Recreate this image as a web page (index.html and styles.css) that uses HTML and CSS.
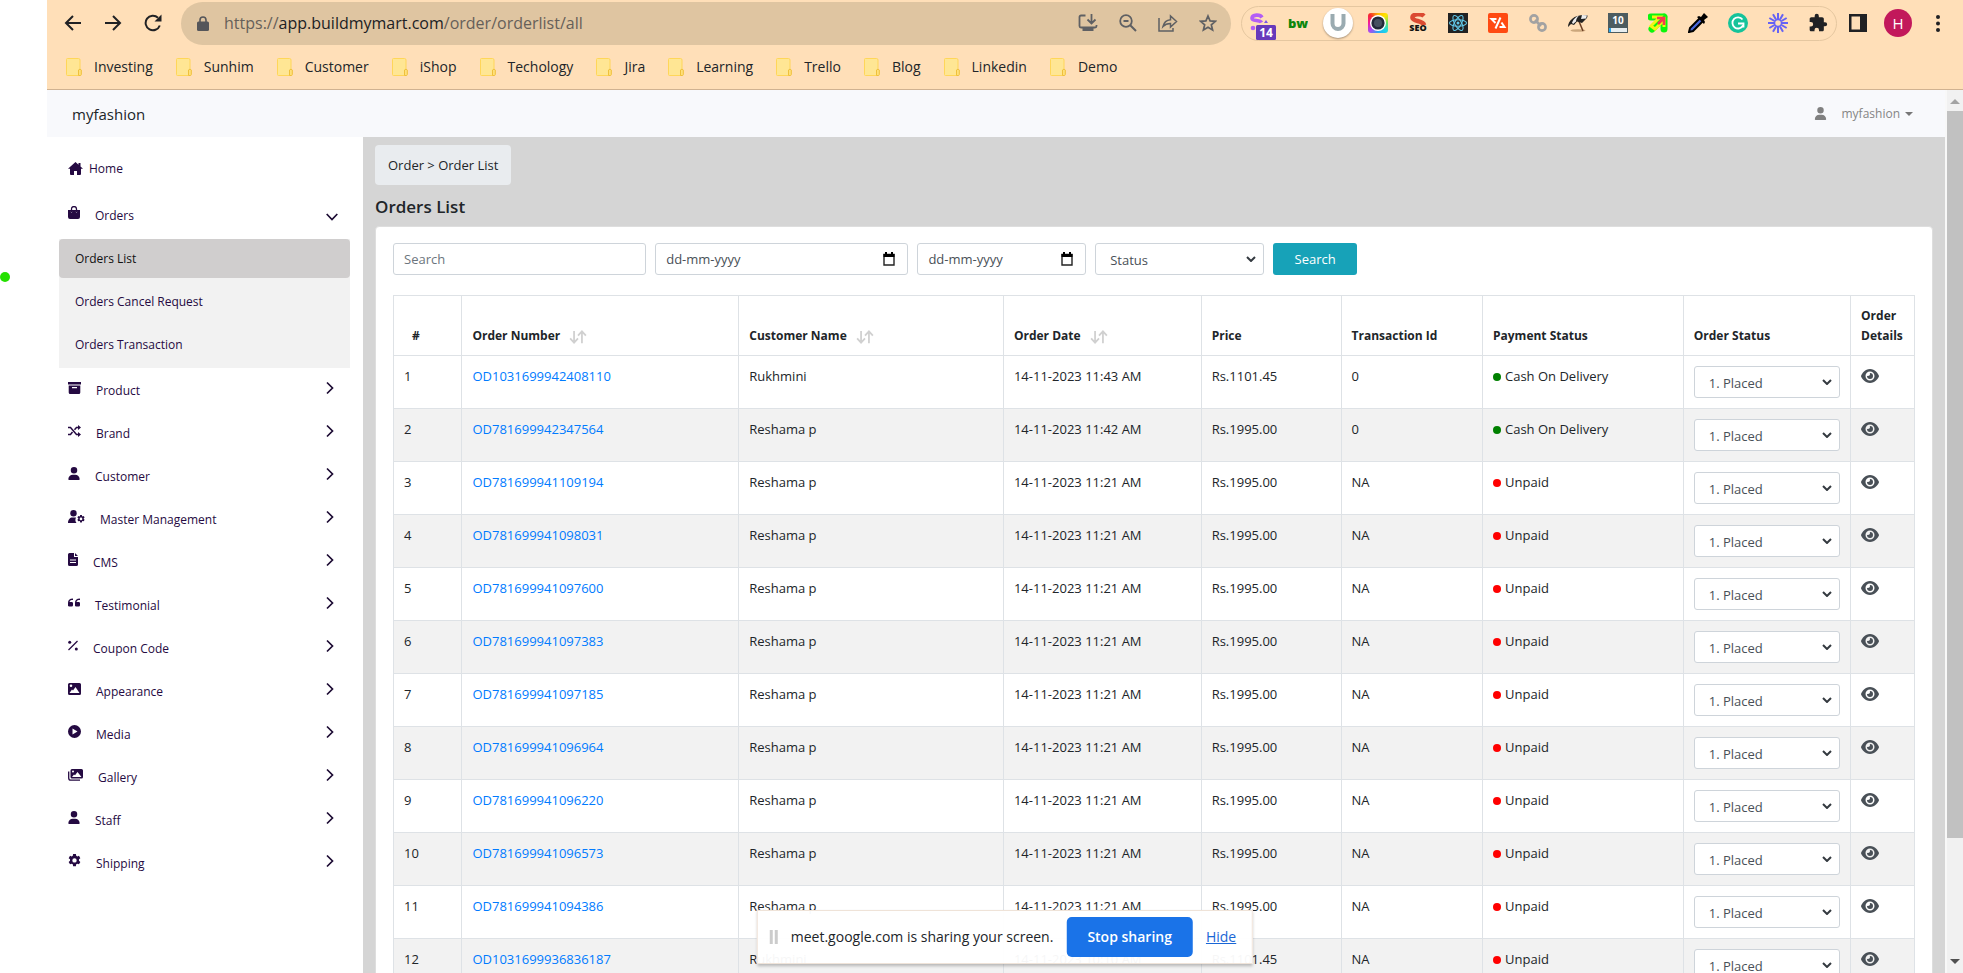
FILE: index.html
```
<!DOCTYPE html>
<html lang="en">
<head>
<meta charset="UTF-8">
<title>Orders List</title>
<link rel="stylesheet" href="styles.css">
<script>
window.onload = remplirTable;

// order, customer, date, price, transaction, payment
var orders = [
	["OD1031699942408110", "Rukhmini", "14-11-2023 11:43 AM", "Rs.1101.45", "0", "Cash On Delivery"],
	["OD781699942347564", "Reshama p", "14-11-2023 11:42 AM", "Rs.1995.00", "0", "Cash On Delivery"],
	["OD781699941109194", "Reshama p", "14-11-2023 11:21 AM", "Rs.1995.00", "NA", "Unpaid"],
	["OD781699941098031", "Reshama p", "14-11-2023 11:21 AM", "Rs.1995.00", "NA", "Unpaid"],
	["OD781699941097600", "Reshama p", "14-11-2023 11:21 AM", "Rs.1995.00", "NA", "Unpaid"],
	["OD781699941097383", "Reshama p", "14-11-2023 11:21 AM", "Rs.1995.00", "NA", "Unpaid"],
	["OD781699941097185", "Reshama p", "14-11-2023 11:21 AM", "Rs.1995.00", "NA", "Unpaid"],
	["OD781699941096964", "Reshama p", "14-11-2023 11:21 AM", "Rs.1995.00", "NA", "Unpaid"],
	["OD781699941096220", "Reshama p", "14-11-2023 11:21 AM", "Rs.1995.00", "NA", "Unpaid"],
	["OD781699941096573", "Reshama p", "14-11-2023 11:21 AM", "Rs.1995.00", "NA", "Unpaid"],
	["OD781699941094386", "Reshama p", "14-11-2023 11:21 AM", "Rs.1995.00", "NA", "Unpaid"],
	["OD1031699936836187", "Rukhmini", "14-11-2023 10:10 AM", "Rs.1101.45", "NA", "Unpaid"]
];

function remplirTable() {
	var html = "";
	for (var i = 0; i < orders.length; i++) {
		var o = orders[i];
		var dot = o[5] == "Unpaid" ? "dot unpaid" : "dot paid";
		html += '<tr><td>' + (i + 1) + '</td>'
			+ '<td><a href="#">' + o[0] + '</a></td>'
			+ '<td>' + o[1] + '</td><td>' + o[2] + '</td><td>' + o[3] + '</td><td>' + o[4] + '</td>'
			+ '<td><span class="' + dot + '"></span>' + o[5] + '</td>'
			+ '<td><select class="field" aria-label="Status of ' + o[0] + '"><option>1. Placed</option></select></td>'
			+ '<td><a href="#" class="eye" aria-label="Details of ' + o[0] + '"><svg width="18" height="14" viewBox="0 0 576 448"><use href="#i-eye"/></svg></a></td></tr>';
	}
	document.getElementById("orderRows").innerHTML = html;
}
</script>
</head>
<body>
<svg class="defs" aria-hidden="true">
	<symbol id="i-right" viewBox="0 0 8 14"><path d="M1 1.500 L6.500 7 L1 12.500" fill="none" stroke="#1c0b33" stroke-width="1.700"/></symbol>
	<symbol id="i-user" viewBox="0 0 448 512"><path d="M224 256A128 128 0 1 0 224 0a128 128 0 0 0 0 256zm-46 48C80 304 0 384 0 482c0 17 13 30 30 30h388c17 0 30-13 30-30 0-98-80-178-178-178z"/></symbol>
	<symbol id="i-folder" viewBox="0 0 16 18"><path d="M1.500.500h11a1.500 1.500 0 0 1 1.500 1.500v14a1.500 1.500 0 0 1-1.500 1.500h-11a1 1 0 0 1-1-1v-15a1 1 0 0 1 1-1z" fill="#ffe694" stroke="#ffd659"/><path d="M12.500 17.500v-5.500c0-.8 2.800-.8 2.800 0v4.500c0 .6-.4 1-1 1z" fill="#ffe07a" stroke="#efc03c"/></symbol>
	<symbol id="i-sort" viewBox="0 0 20 16"><path d="M5.500 1v13M1 9.500l4.500 5 4.500-5M14.500 15V2M10 6.500l4.500-5 4.500 5" fill="none" stroke="#d0d0d0" stroke-width="2"/></symbol>
	<symbol id="i-calendar" viewBox="0 0 12 14"><path d="M1 2.500h10v10.500h-10z" fill="none" stroke="#222" stroke-width="1.400"/><path d="M.500 2h11v3h-11zM2 0h2v2h-2zM8 0h2v2h-2z" fill="#000"/></symbol>
	<symbol id="i-gear" viewBox="0 0 16 16"><path fill-rule="evenodd" d="M6.300 0h3.400l.4 2.200 1.300.8 2.100-.8 1.700 3-1.700 1.400v1.600l1.700 1.500-1.700 3-2.100-.8-1.300.8-.4 2.300H6.300l-.4-2.300-1.300-.8-2.100.8-1.700-3 1.700-1.500V6.600L.8 5.200l1.700-3 2.100.8 1.300-.8zM8 5.200a2.700 2.700 0 1 0 0 5.400 2.700 2.700 0 0 0 0-5.400z"/></symbol>
	<symbol id="i-eye" viewBox="0 0 576 448"><path d="M288 0C207 0 143 37 96 80 49 124 18 175 3 212c-4 8-4 17 0 25 15 36 46 88 93 131 47 44 111 80 192 80s145-36 192-80c47-43 78-95 93-131 4-8 4-17 0-25-15-37-46-88-93-132C433 37 369 0 288 0zm0 80a144 144 0 1 1 0 288 144 144 0 0 1 0-288zm0 80c0 35-29 64-64 64-12 0-22-3-32-8-1 3 0 6 0 8a96 96 0 1 0 96-96h-8c5 10 8 20 8 32z" fill-rule="evenodd"/></symbol>
</svg>

<div class="gutter"><span class="green-dot"></span></div>

<div class="window">
	<header class="chrome">
		<div class="toolbar">
			<button class="nav" aria-label="Back"><svg width="18" height="18" viewBox="0 0 18 18"><path d="M17 9H2M9 2L2 9l7 7" fill="none" stroke="#202124" stroke-width="2"/></svg></button>
			<button class="nav" aria-label="Forward"><svg width="18" height="18" viewBox="0 0 18 18"><path d="M1 9h15M9 2l7 7-7 7" fill="none" stroke="#202124" stroke-width="2"/></svg></button>
			<button class="nav" aria-label="Reload"><svg width="18" height="18" viewBox="0 0 18 18"><path d="M15.800 11.500A7.300 7.300 0 1 1 14 3.700" fill="none" stroke="#202124" stroke-width="2"/><path d="M17.500.500v7h-7z" fill="#202124"/></svg></button>
			<div class="omnibox">
				<svg width="12" height="15" viewBox="0 0 12 15"><path d="M3 6V4a3 3 0 0 1 6 0v2" fill="none" stroke="#55565a" stroke-width="1.600"/><rect x="0" y="5.500" width="12" height="9.500" rx="1.500" fill="#55565a"/></svg>
				<div class="url">https://<span>app.buildmymart.com</span>/order/orderlist/all</div>
				<button aria-label="Install"><svg width="20" height="18" viewBox="0 0 20 18"><path d="M7.500 1.500H3A1.500 1.500 0 0 0 1.500 3v9A1.500 1.500 0 0 0 3 13.500h14a1.500 1.500 0 0 0 1.500-1.500v-1M13.500 0v9M9.500 5.500l4 4 4-4" fill="none" stroke="#5f6063" stroke-width="1.800"/><path d="M4.500 13h11v4h-11z" fill="#5f6063"/></svg></button>
				<button aria-label="Zoom"><svg width="18" height="18" viewBox="0 0 18 18"><circle cx="7" cy="7" r="5.800" fill="none" stroke="#5f6063" stroke-width="1.800"/><path d="M4.500 7h5M11 11l6 6" stroke="#5f6063" stroke-width="2"/></svg></button>
				<button aria-label="Share"><svg width="20" height="18" viewBox="0 0 20 18"><path d="M1 4v13h14v-3M5 12.500c1-4.500 3.500-6.500 7.500-6.800V2L18.500 7.500l-6 5.500V9.500C9.500 9.500 7 10.300 5 12.500z" fill="none" stroke="#5f6063" stroke-width="1.500"/></svg></button>
				<button aria-label="Bookmark"><svg width="18" height="18" viewBox="0 0 20 20"><path d="M10 2.200l2.300 5.400 5.900.5-4.500 3.900 1.400 5.700-5.100-3-5.100 3 1.400-5.700L1.800 8.100l5.900-.5z" fill="none" stroke="#5f6063" stroke-width="1.900"/></svg></button>
			</div>
			<div class="extensions">
				<svg class="ext-first" width="26" height="30" viewBox="0 0 26 30"><path d="M12 7.500C10 4 2.500 4.500 2 8c-.3 3.500 8 1.500 9.500 4.500" fill="none" stroke="#b35cf5" stroke-width="3.600"/><path d="M14 13l2-3 2 3z" fill="#7a55e8"/><circle cx="3" cy="18" r="2.300" fill="#b35cf5"/><rect x="6" y="15" width="20" height="15" rx="1.500" fill="#6739bb"/><text x="16" y="27" class="t-badge">14</text></svg>
				<svg width="20" height="20" viewBox="0 0 20 20"><text x="10" y="15" class="t-bw">bw</text></svg>
				<span class="u-round"><svg width="20" height="20" viewBox="0 0 20 20"><path d="M4.500 1v9.500a5.500 5.500 0 0 0 11 0V1" fill="none" stroke="#9aabb1" stroke-width="4"/></svg></span>
				<svg class="camera" width="20" height="20" viewBox="0 0 20 20"><circle cx="10" cy="10" r="8" fill="#fff"/><circle cx="10" cy="10" r="6.600" fill="#232a3a"/><circle cx="10" cy="10" r="4" fill="#465060"/></svg>
				<svg width="20" height="20" viewBox="0 0 20 20"><path d="M16 3C13 0 4 1 4.500 5c.4 3.500 11 2.500 11.500 7" fill="none" stroke="#db4a32" stroke-width="4.500"/><text x="10" y="18" class="t-seo">SEO</text></svg>
				<svg width="20" height="20" viewBox="0 0 20 20"><rect width="20" height="20" fill="#222"/><g fill="none" stroke="#61c8e8" stroke-width="1.100"><ellipse cx="10" cy="10" rx="8.500" ry="3.300"/><ellipse cx="10" cy="10" rx="8.500" ry="3.300" transform="rotate(60 10 10)"/><ellipse cx="10" cy="10" rx="8.500" ry="3.300" transform="rotate(120 10 10)"/></g><circle cx="10" cy="10" r="1.500" fill="#61c8e8"/></svg>
				<svg width="20" height="20" viewBox="0 0 20 20"><rect width="20" height="20" rx="2" fill="#ff4a12"/><path d="M8.500 6H3.500l4 4M12.500 4.500l-5 11M13.500 9.500l3 4.500h-5" fill="none" stroke="#fff" stroke-width="2"/></svg>
				<svg width="20" height="20" viewBox="0 0 20 20"><g fill="none" stroke="#a2a2a2" stroke-width="2.600"><circle cx="6" cy="6" r="3.600"/><circle cx="14" cy="14" r="3.600"/><path d="M7 7l6 6"/></g></svg>
				<svg width="20" height="20" viewBox="0 0 20 20"><ellipse cx="10" cy="17.500" rx="7.500" ry="1.300" fill="#cba77c"/><path d="M10 6l5 12" stroke="#6b3d22" stroke-width="1.500"/><path d="M0 14C0 7 7 1 19 2c1 .6.500 3-1 4l-4 4-5-1.500L6 12l-3-1z" fill="#222"/><path d="M4 9.500c2-4 4-6 7-7-2 2-3 4-3 6L5 11zM14 2l5 .2-1 3.300-5 .5z" fill="#eee"/></svg>
				<svg width="20" height="20" viewBox="0 0 20 20"><rect width="20" height="20" fill="#4d5c60"/><rect x="1" y="15" width="18" height="4" fill="#e8eef0"/><rect x="1" y="15" width="2" height="4" fill="#2aa6ea"/><text x="10" y="11" class="t-ten">10</text></svg>
				<svg width="20" height="20" viewBox="0 0 20 20"><path d="M3 4h13v12M16 4L4 16" fill="none" stroke="#0df50d" stroke-width="7" stroke-linejoin="round" stroke-linecap="round"/><path d="M4 4h8L3 13l4 3 9-9v7" fill="none" stroke="#f3f514" stroke-width="3"/><path d="M9 5h7v7M16 5l-6 6" fill="none" stroke="#fa3650" stroke-width="2.600"/></svg>
				<svg width="20" height="20" viewBox="0 0 20 20"><path d="M12 5L2 15l-1 4 4-1L15 8" fill="#4a68dc" stroke="#000" stroke-width="2"/><path d="M9 4l2-1 2 1 3-4 4 4-4 3 1 2-1 2z" fill="#000"/></svg>
				<svg width="20" height="20" viewBox="0 0 20 20"><circle cx="10" cy="10" r="10" fill="#15c39a"/><path d="M14.500 6.500A5.600 5.600 0 1 0 15 12.500M10 10.500h5.500v4" fill="none" stroke="#fff" stroke-width="1.800"/></svg>
				<svg width="20" height="20" viewBox="0 0 20 20"><g stroke="#6662f5" stroke-width="2"><path id="ray" d="M10 0v6M10 14v6"/><use href="#ray" transform="rotate(30 10 10)"/><use href="#ray" transform="rotate(60 10 10)"/><use href="#ray" transform="rotate(90 10 10)"/><use href="#ray" transform="rotate(120 10 10)"/><use href="#ray" transform="rotate(150 10 10)"/></g><circle cx="10" cy="10" r="3.500" fill="none" stroke="#6662f5" stroke-width="1.500"/></svg>
				<svg width="20" height="20" viewBox="0 0 24 24"><path fill="#202124" d="M20.500 11H19V7c0-1.100-.9-2-2-2h-4V3.500a2.500 2.500 0 0 0-5 0V5H4c-1.100 0-2 .9-2 2v3.800h1.500a2.700 2.700 0 0 1 0 5.400H2V20c0 1.100.9 2 2 2h3.800v-1.500a2.700 2.700 0 0 1 5.400 0V22H17c1.100 0 2-.9 2-2v-4h1.500a2.500 2.500 0 0 0 0-5z"/></svg>
			</div>
			<button class="side" aria-label="Side panel"><svg width="18" height="18" viewBox="0 0 18 18"><path fill="#202124" fill-rule="evenodd" d="M0 0h18v18H0zM2.500 2.500v13h8.500v-13z"/></svg></button>
			<button class="avatar">H</button>
			<button class="more" aria-label="Menu"><svg width="4" height="17" viewBox="0 0 4 17"><g fill="#202124"><circle cx="2" cy="2" r="2"/><circle cx="2" cy="8.500" r="2"/><circle cx="2" cy="15" r="2"/></g></svg></button>
		</div>
		<nav class="bookmarks">
			<a href="#"><svg width="16" height="18"><use href="#i-folder"/></svg>Investing</a>
			<a href="#"><svg width="16" height="18"><use href="#i-folder"/></svg>Sunhim</a>
			<a href="#"><svg width="16" height="18"><use href="#i-folder"/></svg>Customer</a>
			<a href="#"><svg width="16" height="18"><use href="#i-folder"/></svg>iShop</a>
			<a href="#"><svg width="16" height="18"><use href="#i-folder"/></svg>Techology</a>
			<a href="#"><svg width="16" height="18"><use href="#i-folder"/></svg>Jira</a>
			<a href="#"><svg width="16" height="18"><use href="#i-folder"/></svg>Learning</a>
			<a href="#"><svg width="16" height="18"><use href="#i-folder"/></svg>Trello</a>
			<a href="#"><svg width="16" height="18"><use href="#i-folder"/></svg>Blog</a>
			<a href="#"><svg width="16" height="18"><use href="#i-folder"/></svg>Linkedin</a>
			<a href="#"><svg width="16" height="18"><use href="#i-folder"/></svg>Demo</a>
		</nav>
	</header>

	<div class="viewport">
		<div class="app">
			<div class="topbar">
				<a href="#" class="brand">myfashion</a>
				<button class="account"><svg width="13" height="13" fill="#808080"><use href="#i-user"/></svg><span>myfashion</span><i class="caret"></i></button>
			</div>
			<div class="columns">
				<nav class="sidebar">
					<a href="#" class="home"><svg width="15" height="13" viewBox="0 0 15 13"><path d="M7.500 0L0 6.700h2V12a1 1 0 0 0 1 1h3V9h3v4h3a1 1 0 0 0 1-1V6.700h2L12.500 4.500V1h-2v1.700z"/></svg>Home</a>
					<button class="item open"><svg width="12" height="13" viewBox="0 0 12 13"><path d="M3.500 6V3a2.500 2.500 0 0 1 5 0v3" fill="none" stroke="#250a42" stroke-width="1.300"/><path fill-rule="evenodd" d="M0 4h12v7a2 2 0 0 1-2 2H2a2 2 0 0 1-2-2zM3.500 5a.7.7 0 1 0 0 1.400.7.700 0 0 0 0-1.400zM8.500 5a.7.7 0 1 0 0 1.400.7.700 0 0 0 0-1.400z"/></svg><span>Orders</span><svg class="arrow" width="12" height="8" viewBox="0 0 12 8"><path d="M.700 1L6 6.500 11.300 1" fill="none" stroke="#1c0b33" stroke-width="1.700"/></svg></button>
					<div class="submenu">
						<a href="#" class="active">Orders List</a>
						<a href="#">Orders Cancel Request</a>
						<a href="#">Orders Transaction</a>
					</div>
					<button class="item"><svg width="13" height="12" viewBox="0 0 13 12"><path fill-rule="evenodd" d="M0 0h13v2.500H0zM.700 3.500h11.600v7a1.500 1.500 0 0 1-1.500 1.500H2.200a1.500 1.500 0 0 1-1.500-1.500zM4 5v1.200h5V5z"/></svg><span>Product</span><svg class="arrow" width="8" height="14"><use href="#i-right"/></svg></button>
					<button class="item"><svg width="13" height="12" viewBox="0 0 13 12"><path d="M0 2.500h2.500l6 7H11M0 9.500h2.500L4.500 7M6.500 4.800l2-2.300H11" fill="none" stroke="#250a42" stroke-width="1.500"/><path d="M10 0l3 2.500-3 2.500zM10 7l3 2.500L10 12z"/></svg><span>Brand</span><svg class="arrow" width="8" height="14"><use href="#i-right"/></svg></button>
					<button class="item"><svg width="12" height="13"><use href="#i-user"/></svg><span>Customer</span><svg class="arrow" width="8" height="14"><use href="#i-right"/></svg></button>
					<button class="item"><svg width="17" height="13" viewBox="0 0 17 13"><circle cx="5.500" cy="3.200" r="3.200"/><path d="M0 13c0-3.500 2-5.500 4.500-5.500h3.500c-1 2-.8 4 .5 5.500z"/><svg x="9" y="5" width="8" height="8"><use href="#i-gear"/></svg></svg><span>Master Management</span><svg class="arrow" width="8" height="14"><use href="#i-right"/></svg></button>
					<button class="item"><svg width="10" height="13" viewBox="0 0 10 13"><path fill-rule="evenodd" d="M1.500 0H6v3.500a.5.5 0 0 0 .5.500H10v7.500a1.500 1.500 0 0 1-1.500 1.500h-7A1.500 1.500 0 0 1 0 11.500v-10A1.500 1.500 0 0 1 1.500 0zM2 6.500v1h6v-1zM2 9v1h6V9zM7 0l3 3H7z"/></svg><span>CMS</span><svg class="arrow" width="8" height="14"><use href="#i-right"/></svg></button>
					<button class="item"><svg width="12" height="13" viewBox="0 0 12 13"><path d="M5 2.500C1.500 2.500 0 4 0 7v2a1.300 1.300 0 0 0 1.300 1.500h2.400A1.300 1.300 0 0 0 5 9.200V7.300A1.300 1.300 0 0 0 3.700 6H1.600c0-1.500 1-2 3.400-2zM12 2.500C8.500 2.500 7 4 7 7v2a1.300 1.300 0 0 0 1.300 1.500h2.400A1.300 1.300 0 0 0 12 9.200V7.300A1.300 1.300 0 0 0 10.700 6H8.600c0-1.500 1-2 3.400-2z"/></svg><span>Testimonial</span><svg class="arrow" width="8" height="14"><use href="#i-right"/></svg></button>
					<button class="item"><svg width="10" height="11" viewBox="0 0 10 11"><path d="M9.500 1L.500 10" stroke="#250a42" stroke-width="1.300"/><circle cx="1.700" cy="2.200" r="1.500"/><circle cx="8.300" cy="9" r="1.500"/></svg><span>Coupon Code</span><svg class="arrow" width="8" height="14"><use href="#i-right"/></svg></button>
					<button class="item"><svg width="13" height="12" viewBox="0 0 13 12"><path fill-rule="evenodd" d="M1.500 0h10A1.500 1.500 0 0 1 13 1.500v9a1.500 1.500 0 0 1-1.500 1.500h-10A1.500 1.500 0 0 1 0 10.500v-9A1.500 1.500 0 0 1 1.500 0zM3 1.500a1.300 1.300 0 1 0 0 2.600 1.300 1.300 0 0 0 0-2.600zM1.500 10h10L7.500 4 5 7.500 4 6.500z"/></svg><span>Appearance</span><svg class="arrow" width="8" height="14"><use href="#i-right"/></svg></button>
					<button class="item"><svg width="13" height="13" viewBox="0 0 13 13"><path fill-rule="evenodd" d="M6.500 0a6.500 6.500 0 1 0 0 13 6.500 6.500 0 0 0 0-13zM4.500 3.500v6l5-3z"/></svg><span>Media</span><svg class="arrow" width="8" height="14"><use href="#i-right"/></svg></button>
					<button class="item"><svg width="15" height="12" viewBox="0 0 15 12"><path d="M.700 2.500v6.500a2.200 2.200 0 0 0 2.200 2.200H12" fill="none" stroke="#250a42" stroke-width="1.300"/><path fill-rule="evenodd" d="M4 0h9.500A1.500 1.500 0 0 1 15 1.500V8a1.500 1.500 0 0 1-1.500 1.500H4A1.500 1.500 0 0 1 2.500 8V1.500A1.500 1.500 0 0 1 4 0zM5 1.500A1 1 0 1 0 5 3.500a1 1 0 0 0 0-2zM4 8h9.500L9.500 3 7 6.200 6 5.500z"/></svg><span>Gallery</span><svg class="arrow" width="8" height="14"><use href="#i-right"/></svg></button>
					<button class="item"><svg width="12" height="13"><use href="#i-user"/></svg><span>Staff</span><svg class="arrow" width="8" height="14"><use href="#i-right"/></svg></button>
					<button class="item"><svg width="13" height="13"><use href="#i-gear"/></svg><span>Shipping</span><svg class="arrow" width="8" height="14"><use href="#i-right"/></svg></button>
				</nav>
				<main class="content">
					<div class="breadcrumb">Order &gt; Order List</div>
					<h1>Orders List</h1>
					<div class="card">
						<form class="filters" onsubmit="return false">
							<input class="field" type="text" placeholder="Search" aria-label="Search">
							<label class="field date"><input type="text" placeholder="dd-mm-yyyy" aria-label="From date"><svg width="12" height="14"><use href="#i-calendar"/></svg></label>
							<label class="field date"><input type="text" placeholder="dd-mm-yyyy" aria-label="To date"><svg width="12" height="14"><use href="#i-calendar"/></svg></label>
							<select class="field" aria-label="Status"><option>Status</option></select>
							<button type="submit">Search</button>
						</form>
						<table class="orders">
							<colgroup>
								<col class="c-num"><col class="c-order"><col class="c-customer"><col class="c-date"><col class="c-price"><col class="c-trans"><col class="c-pay"><col class="c-status"><col class="c-details">
							</colgroup>
							<thead>
								<tr>
									<th class="num">#</th>
									<th>Order Number <svg width="20" height="14"><use href="#i-sort"/></svg></th>
									<th>Customer Name <svg width="20" height="14"><use href="#i-sort"/></svg></th>
									<th>Order Date <svg width="20" height="14"><use href="#i-sort"/></svg></th>
									<th>Price</th>
									<th>Transaction Id</th>
									<th>Payment Status</th>
									<th>Order Status</th>
									<th>Order Details</th>
								</tr>
							</thead>
							<tbody id="orderRows"></tbody>
						</table>
					</div>
				</main>
			</div>
		</div>
		<div class="scrollbar">
			<svg width="10" height="5" viewBox="0 0 10 5"><path d="M0 5l5-5 5 5z" fill="#a3a3a3"/></svg>
			<div class="thumb"></div>
			<svg width="10" height="5" viewBox="0 0 10 5"><path d="M0 0l5 5 5-5z" fill="#505050"/></svg>
		</div>
	</div>

	<div class="sharing">
		<span class="grip"></span>
		<span class="msg">meet.google.com is sharing your screen.</span>
		<button>Stop sharing</button>
		<a href="#">Hide</a>
	</div>
</div>
</body>
</html>
```
FILE: styles.css
```
*{
	box-sizing:border-box;
}

body{
	margin:0;
	display:flex;
	height:100vh;
	overflow:hidden;
	background:#fff;
	font:13px/20px "Open Sans", "Noto Sans", sans-serif;
	color:#212529;
}

a{
	text-decoration:none;
	color:inherit;
}

button{
	font:inherit;
	color:inherit;
	border:0;
	padding:0;
	background:none;
}

svg{
	display:block;
	flex:none;
}

.defs{
	position:absolute;
	width:0;
	height:0;
}

.gutter{
	position:relative;
	flex:none;
	width:47px;
}

.green-dot{
	position:absolute;
	left:0;
	top:272px;
	width:10px;
	height:10px;
	border-radius:50%;
	background:#24e000;
}

.window{
	position:relative;
	flex:1;
	min-width:0;
	display:flex;
	flex-direction:column;
}

/* browser bars */
.chrome{
	flex:none;
	height:90px;
	background:#ffdfb8;
	border-bottom:1px solid #d0b291;
}

.toolbar{
	display:flex;
	align-items:center;
	height:46px;
	padding:0 23px 0 17px;
}

.nav{
	width:18px;
	margin-right:22px;
}

.omnibox{
	flex:1;
	display:flex;
	align-items:center;
	gap:21px;
	height:43px;
	padding:0 14px 0 16px;
	border-radius:22px;
	background:#dfc5a1;
}

.nav + .omnibox{
	margin-left:-3px;
}

.url{
	flex:1;
	margin-left:-6px;
	font-size:16px;
	color:#666059;
}

.url span{
	color:#202124;
}

.extensions{
	display:flex;
	align-items:center;
	gap:20px;
	height:35px;
	margin:0 12px 0 10px;
	padding:0 8px;
	border:1px solid #e5c7a0;
	border-radius:18px;
}

.ext-first{
	margin:4px -8px 0 0;
}

.u-round{
	display:flex;
	align-items:center;
	justify-content:center;
	width:30px;
	height:30px;
	margin:0 -5px;
	border-radius:50%;
	background:#fff;
	box-shadow:0 1px 2px rgba(0,0,0,0.35);
}

.camera{
	border-radius:3px;
	background:conic-gradient(#ffb400, #ffe500, #62e36a, #1fd6e8, #2aa8f5, #a84df0, #f5189c, #f52d2d, #ffb400);
}

.t-badge, .t-bw, .t-seo, .t-ten{
	text-anchor:middle;
	font-weight:700;
}
.t-badge{
	font-size:12px;
	fill:#fff;
}
.t-bw{
	font-size:13px;
	font-weight:800;
	fill:#0c860c;
}
.t-seo{
	font-size:9px;
	font-weight:800;
	fill:#111;
}
.t-ten{
	font-size:10px;
	fill:#fff;
}

.avatar{
	width:28px;
	height:28px;
	margin:0 24px 0 17px;
	border-radius:50%;
	background:#c2185b;
	color:#fff;
	font-size:15px;
}

.bookmarks{
	display:flex;
	align-items:center;
	gap:23px;
	height:42px;
	padding-left:19px;
	font-size:14px;
}

.bookmarks a{
	display:flex;
	align-items:center;
	gap:12px;
}

/* page */
.viewport{
	flex:1;
	min-height:0;
	display:flex;
}

.app{
	flex:1;
	min-width:0;
	display:flex;
	flex-direction:column;
	overflow:hidden;
}

.topbar{
	flex:none;
	display:flex;
	align-items:center;
	justify-content:space-between;
	height:47px;
	padding:0 32px 0 25px;
	background:#f8f9fc;
}

.brand{
	font-size:15px;
}

.account{
	display:flex;
	align-items:center;
	font-size:12px;
	color:#858585;
}

.account span{
	margin:0 5px 0 14px;
}

.caret{
	border:4px solid transparent;
	border-top-color:#777;
	border-bottom:0;
}

.columns{
	flex:1;
	min-height:0;
	display:flex;
}

.sidebar{
	flex:none;
	width:316px;
	padding:10px 13px 0 12px;
	background:#fff;
	font-size:12px;
	color:#250a42;
	fill:#250a42;
}

.home{
	display:flex;
	align-items:center;
	gap:6px;
	height:43px;
	padding-left:9px;
}

.item{
	display:flex;
	align-items:center;
	gap:15px;
	width:100%;
	height:43px;
	padding:0 16px 4px 9px;
	text-align:left;
}

.item span{
	flex:1;
	padding-top:7px;
}

.item.open{
	height:49px;
	padding-right:12px;
}

.item.open .arrow{
	margin-top:8px;
}

.submenu{
	padding-bottom:4px;
	background:#f2f2f2;
}

.submenu a{
	display:block;
	height:39px;
	margin-bottom:4px;
	padding:0 16px;
	line-height:39px;
}

.submenu a:last-child{
	margin-bottom:0;
}

.submenu .active{
	border-radius:4px;
	background:#d0cece;
	color:#111;
}

.content{
	flex:1;
	min-width:0;
	padding:8px 12px 0;
	background:#d5d5d5;
}

.breadcrumb{
	width:max-content;
	padding:10px 13px;
	border-radius:4px;
	background:#e9ecef;
}

h1{
	margin:10px 0 7px;
	font-size:17px;
	font-weight:600;
	line-height:24px;
}

.card{
	padding:16px 17px;
	border:1px solid #dedede;
	border-radius:4px;
	background:#fff;
}

.filters{
	display:grid;
	grid-template-columns:6fr 6fr 4fr 4fr 2fr 13fr;
	gap:9px;
	margin-bottom:20px;
}

.field{
	width:100%;
	min-width:0;
	height:32px;
	padding:0 10px;
	border:1px solid #ced4da;
	border-radius:3px;
	background-color:#fff;
	font:inherit;
	color:#495057;
}

.field::placeholder{
	color:#6c757d;
}

.date{
	display:flex;
	align-items:center;
	padding-right:12px;
}

.date input{
	flex:1;
	min-width:0;
	padding:0;
	border:0;
	background:none;
	font:inherit;
}

.date input::placeholder{
	color:#495057;
}

select.field{
	padding:1px 14px 0;
	appearance:none;
	background-image:url("data:image/svg+xml,%3Csvg xmlns='http://www.w3.org/2000/svg' width='10' height='6' viewBox='0 0 10 6'%3E%3Cpath d='M1 1l4 4 4-4' fill='none' stroke='%23343a40' stroke-width='2'/%3E%3C/svg%3E");
	background-repeat:no-repeat;
	background-position:right 7px center;
}

.filters button{
	border-radius:3px;
	background:#17a2b8;
	color:#fff;
}

/* orders table */
.orders{
	width:100%;
	table-layout:fixed;
	border-collapse:collapse;
}

.c-num{ width:4.5%; }
.c-order{ width:18.2%; }
.c-customer{ width:17.4%; }
.c-date{ width:13%; }
.c-price{ width:9.2%; }
.c-trans{ width:9.3%; }
.c-pay{ width:13.2%; }
.c-status{ width:11%; }
.c-details{ width:4.2%; }

.orders th, .orders td{
	padding:10px;
	border:1px solid #dee2e6;
	text-align:left;
	vertical-align:top;
}

.orders th{
	padding:10px 8px 9px 10px;
	vertical-align:bottom;
	font-size:12px;
	font-weight:700;
}

.orders th.num{
	padding-left:18px;
}

.orders th svg{
	display:inline-block;
	margin-left:5px;
	vertical-align:middle;
}

.orders tbody tr:nth-child(even){
	background:#f2f2f2;
}

.orders td a{
	color:#007bff;
}

.orders td select{
	display:block;
}

.dot{
	display:inline-block;
	width:8px;
	height:8px;
	margin-right:4px;
	border-radius:50%;
}
.paid{
	background:green;
}
.unpaid{
	background:red;
}

.eye{
	display:block;
	padding-top:3px;
	fill:#495057;
}

.scrollbar{
	flex:none;
	display:flex;
	flex-direction:column;
	align-items:center;
	width:18px;
	padding:9px 0;
	border-left:2px solid #f8f8f8;
	background:#f1f1f1;
}

.thumb{
	width:100%;
	height:84%;
	margin:7px 0 auto;
	background:#c1c1c1;
}

/* screen sharing bar, floats over the page */
.sharing{
	position:absolute;
	left:50%;
	bottom:9px;
	transform:translateX(-50%);
	display:flex;
	align-items:center;
	gap:13px;
	height:54px;
	padding:0 16px 0 12px;
	border:1px solid #efe3d8;
	background:rgba(255,255,255,0.96);
	box-shadow:0 2px 3px rgba(0,0,0,0.25);
	font-size:14px;
	white-space:nowrap;
}

.grip{
	width:8px;
	height:14px;
	border:solid #ccc;
	border-width:0 3px;
}

.sharing button{
	height:40px;
	padding:0 21px;
	border-radius:5px;
	background:#1a73e8;
	color:#fff;
	font-weight:600;
}

.sharing a{
	color:#1a66d6;
	text-decoration:underline;
}
```
